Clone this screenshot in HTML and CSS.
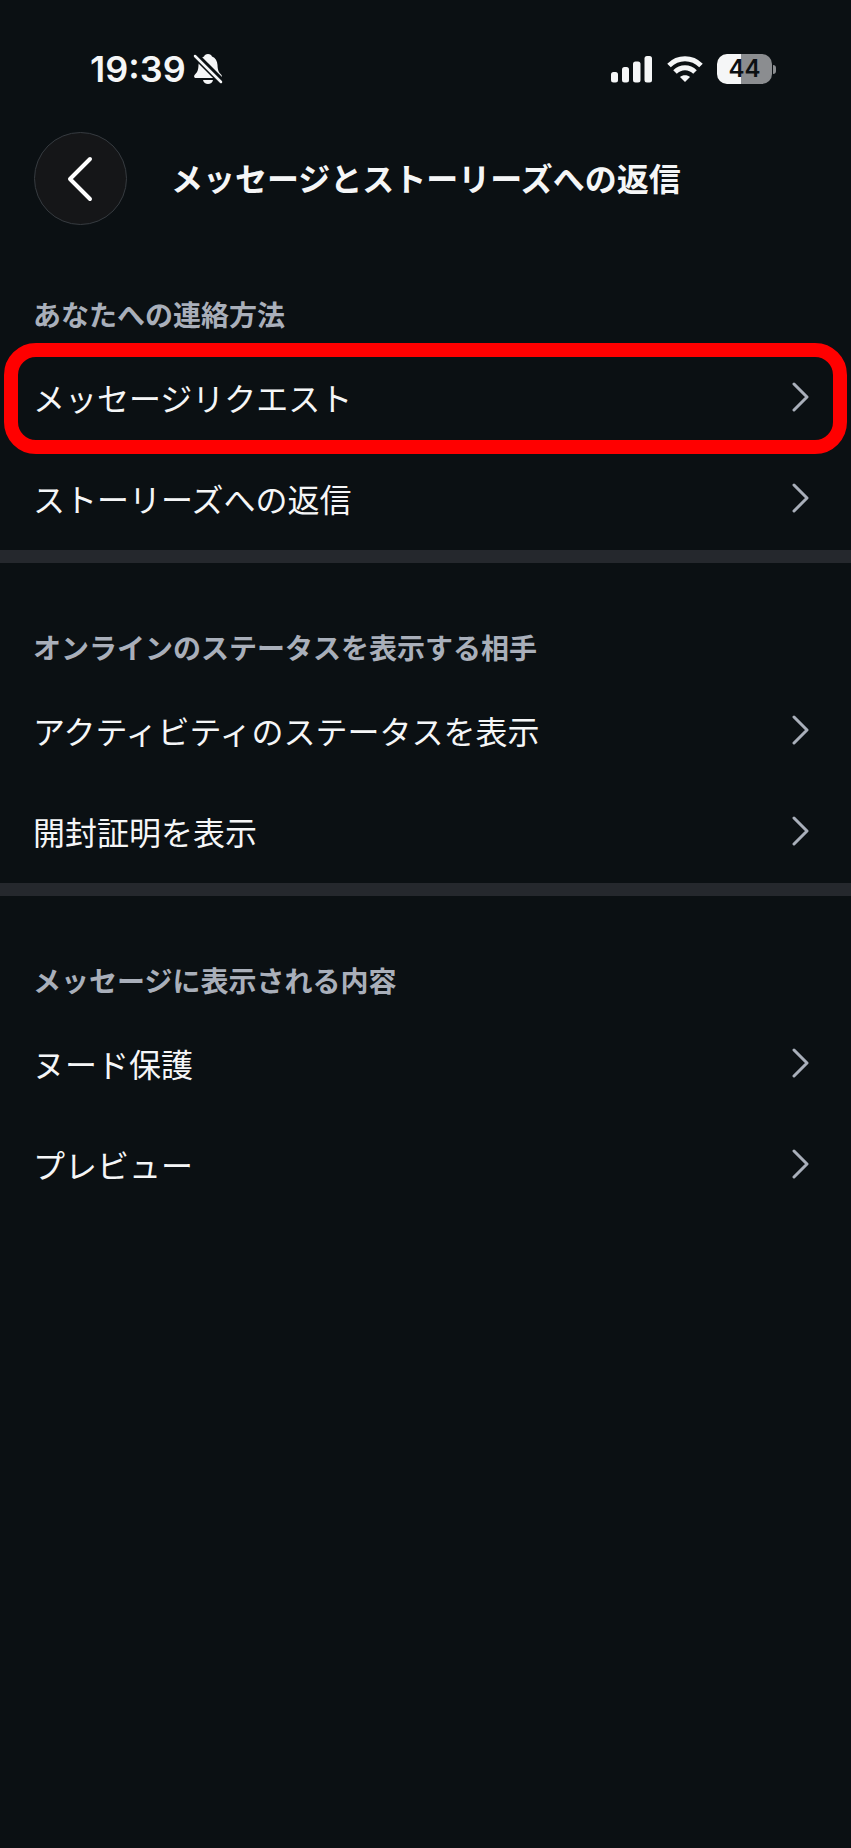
FILE: index.html
```html
<!DOCTYPE html>
<html lang="ja">
  <head>
    <meta charset="UTF-8" />
    <meta name="viewport" content="width=device-width, initial-scale=1.0" />
    <title>メッセージとストーリーズへの返信</title>
    <link rel="stylesheet" href="styles.css">
  </head>
  <body>
    <!-- ステータスバー -->
    <div class="status-bar">
      <div class="status-left">
        <span class="time">19:39</span>
        <svg class="bell" width="30" height="32" viewBox="0 0 30 32" aria-hidden="true">
          <path d="M15 1C12.800 1 11.500 2 11 3.400C7.500 4.800 5.700 7.800 5.500 12C5.300 17 4.500 19 2 21.500C0.500 23 1 25 3 25H27C29 25 29.500 23 28 21.500C25.500 19 24.700 17 24.500 12C24.300 7.800 22.500 4.800 19 3.400C18.500 2 17.200 1 15 1Z" fill="#f5f6f7" />
          <path d="M10 27H20C19.500 29.700 17.500 31 15 31S10.500 29.700 10 27Z" fill="#f5f6f7" />
          <path d="M0 0L30 30" stroke="#0b1013" stroke-width="7" />
          <path d="M2 3L28 29" stroke="#f5f6f7" stroke-width="2.500" stroke-linecap="round" />
        </svg>
      </div>
      <div class="status-right">
        <svg width="42" height="28" viewBox="0 0 42 28" fill="#f5f6f7" aria-hidden="true">
          <rect x="0" y="17" width="7" height="10.500" rx="2.500" />
          <rect x="11" y="12" width="7" height="15.500" rx="2.500" />
          <rect x="22" y="6.500" width="7.500" height="21" rx="2.500" />
          <rect x="33.500" y="1" width="7.500" height="26.500" rx="2.500" />
        </svg>
        <svg width="36" height="28" viewBox="0 0 36 28" fill="none" stroke="#f5f6f7" stroke-width="5" aria-hidden="true">
          <path d="M2 10.500C11 1.500 25 1.500 34 10.500" />
          <path d="M8 17C13.700 11.300 22.300 11.300 28 17" />
          <path d="M18 27L13 22C15.500 19.500 20.500 19.500 23 22Z" fill="#f5f6f7" stroke="none" />
        </svg>
        <div class="battery">
          <span class="battery-body">44</span>
          <span class="battery-tip"></span>
        </div>
      </div>
    </div>

    <!-- ヘッダー -->
    <header class="header">
      <button class="back" type="button" aria-label="戻る">
        <svg width="28" height="46" viewBox="0 0 28 46" aria-hidden="true">
          <path d="M23 3L3 23L23 43" />
        </svg>
      </button>
      <h1>メッセージとストーリーズへの返信</h1>
    </header>

    <main>
      <section>
        <h2>あなたへの連絡方法</h2>
        <a class="row highlight" href="#requests">
          <span>メッセージリクエスト</span>
          <svg class="chevron" viewBox="0 0 18 30" aria-hidden="true"><path d="M2 2L15 15L2 28" /></svg>
        </a>
        <a class="row" href="#story-replies">
          <span>ストーリーズへの返信</span>
          <svg class="chevron" viewBox="0 0 18 30" aria-hidden="true"><path d="M2 2L15 15L2 28" /></svg>
        </a>
      </section>

      <section>
        <h2>オンラインのステータスを表示する相手</h2>
        <a class="row" href="#activity">
          <span>アクティビティのステータスを表示</span>
          <svg class="chevron" viewBox="0 0 18 30" aria-hidden="true"><path d="M2 2L15 15L2 28" /></svg>
        </a>
        <a class="row" href="#read-receipts">
          <span>開封証明を表示</span>
          <svg class="chevron" viewBox="0 0 18 30" aria-hidden="true"><path d="M2 2L15 15L2 28" /></svg>
        </a>
      </section>

      <section>
        <h2>メッセージに表示される内容</h2>
        <a class="row" href="#nudity">
          <span>ヌード保護</span>
          <svg class="chevron" viewBox="0 0 18 30" aria-hidden="true"><path d="M2 2L15 15L2 28" /></svg>
        </a>
        <a class="row" href="#preview">
          <span>プレビュー</span>
          <svg class="chevron" viewBox="0 0 18 30" aria-hidden="true"><path d="M2 2L15 15L2 28" /></svg>
        </a>
      </section>
    </main>
  </body>
</html>
```
FILE: styles.css
```css
body {
  margin: 0;
  min-height: 100vh;
  background-color: #0b1013;
  color: #f5f6f7;
  font-family: "Noto Sans CJK JP", sans-serif;
}

/* ステータスバー */
.status-bar {
  display: flex;
  justify-content: space-between;
  align-items: center;
  height: 36px;
  padding: 51px 75px 0 90px;
}

.status-left {
  display: flex;
  align-items: center;
  gap: 7px;
}

.time {
  font-family: Inter, sans-serif;
  font-size: 36px;
  font-weight: 600;
  line-height: 36px;
}

.status-right {
  display: flex;
  align-items: center;
  gap: 14px;
}

.battery {
  display: flex;
  align-items: center;
  gap: 1px;
}

.battery-body {
  width: 55px;
  border-radius: 10px;
  background: linear-gradient(to right, #f5f6f7 44%, #8b8d90 44%);
  color: #0b1013;
  font-family: Inter, sans-serif;
  font-size: 24px;
  font-weight: 600;
  line-height: 30px;
  text-align: center;
}

.battery-tip {
  width: 3px;
  height: 9px;
  border-radius: 0 4px 4px 0;
  background-color: #8b8d90;
}

/* ヘッダー */
.header {
  display: flex;
  align-items: center;
  gap: 44px;
  padding: 45px 34px 5px;
}

.back {
  display: flex;
  align-items: center;
  justify-content: center;
  width: 93px;
  height: 93px;
  padding: 0;
  border: 1px solid #363b40;
  border-radius: 50%;
  background-color: #151618;
  cursor: pointer;
}

.back path {
  fill: none;
  stroke: #ffffff;
  stroke-width: 4;
  stroke-linecap: round;
  stroke-linejoin: round;
}

h1 {
  margin: 0;
  padding-bottom: 4px;
  font-size: 32px;
  font-weight: 700;
  line-height: 48px;
}

/* 設定グループ */
section {
  padding-bottom: 2px;
}

section + section {
  border-top: 13px solid #25282d;
}

h2 {
  margin: 0;
  padding: 63px 33px 11px;
  color: #a9afba;
  font-size: 28px;
  font-weight: 700;
  line-height: 42px;
}

.row {
  position: relative;
  display: flex;
  align-items: center;
  justify-content: space-between;
  height: 101px;
  padding: 0 41px 0 33px;
  color: inherit;
  font-size: 32px;
  text-decoration: none;
}

.chevron {
  width: 18px;
  height: 30px;
  fill: none;
  stroke: #a9afba;
  stroke-width: 3;
  stroke-linecap: round;
  stroke-linejoin: round;
}

/* 赤枠で強調する行 */
.highlight::after {
  content: "";
  position: absolute;
  inset: -3px 4px -7px;
  border: 14px solid #ff0000;
  border-radius: 32px;
}
```
